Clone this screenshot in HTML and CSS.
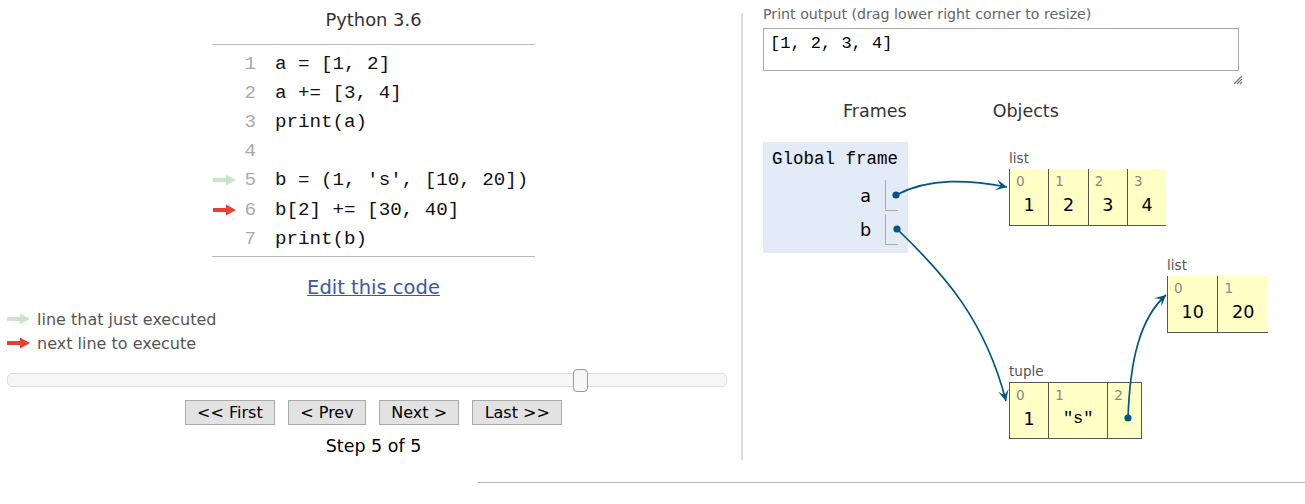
FILE: index.html
```html
<!DOCTYPE html>
<html>
<head>
<meta charset="utf-8">
<title>Python Tutor</title>
<link rel="stylesheet" href="styles.css">
</head>
<body>
<div class="main">
  <div class="left">
    <div class="title">Python 3.6</div>
    <div class="code">
      <div class="row"><span class="gutter"></span><span class="lineno">1</span><span class="src">a = [1, 2]</span></div>
      <div class="row"><span class="gutter"></span><span class="lineno">2</span><span class="src">a += [3, 4]</span></div>
      <div class="row"><span class="gutter"></span><span class="lineno">3</span><span class="src">print(a)</span></div>
      <div class="row"><span class="gutter"></span><span class="lineno">4</span><span class="src"></span></div>
      <div class="row"><span class="gutter"><svg class="arrow" width="23" height="12" viewBox="0 0 23 12"><path d="M0 4 H13 V0.5 L23 6 L13 11.5 V8 H0 Z" fill="#c9e6ca"/></svg></span><span class="lineno">5</span><span class="src">b = (1, 's', [10, 20])</span></div>
      <div class="row"><span class="gutter"><svg class="arrow" width="23" height="12" viewBox="0 0 23 12"><path d="M0 4 H13 V0.5 L23 6 L13 11.5 V8 H0 Z" fill="#e93f34"/></svg></span><span class="lineno">6</span><span class="src">b[2] += [30, 40]</span></div>
      <div class="row"><span class="gutter"></span><span class="lineno">7</span><span class="src">print(b)</span></div>
    </div>
    <a class="edit" href="#">Edit this code</a>
    <div class="legend">
      <div class="legend-row"><svg class="arrow" width="23" height="12" viewBox="0 0 23 12"><path d="M0 4 H13 V0.5 L23 6 L13 11.5 V8 H0 Z" fill="#c9e6ca"/></svg><span>line that just executed</span></div>
      <div class="legend-row"><svg class="arrow" width="23" height="12" viewBox="0 0 23 12"><path d="M0 4 H13 V0.5 L23 6 L13 11.5 V8 H0 Z" fill="#e93f34"/></svg><span>next line to execute</span></div>
    </div>
    <div class="slider"><div class="thumb"></div></div>
    <div class="buttons">
      <button class="btn">&lt;&lt; First</button>
      <button class="btn">&lt; Prev</button>
      <button class="btn">Next &gt;</button>
      <button class="btn">Last &gt;&gt;</button>
    </div>
    <div class="step">Step 5 of 5</div>
  </div>
  <div class="divider"></div>
  <div class="right">
    <div class="print-label">Print output (drag lower right corner to resize)</div>
    <div class="print-wrap">
      <div class="print-box">[1, 2, 3, 4]</div>
      <svg class="handle" width="10" height="10" viewBox="0 0 10 10"><path d="M9 1 L1 9 M9 4 L4 9 M9 7 L7 9" stroke="#777" stroke-width="1.2"/></svg>
    </div>
    <div class="viz">
      <div class="headers"><span class="h-frames">Frames</span><span class="h-objects">Objects</span></div>
      <div class="frame">
        <div class="frame-name">Global frame</div>
        <div class="var"><span class="var-name">a</span><span class="var-val"></span></div>
        <div class="var"><span class="var-name">b</span><span class="var-val"></span></div>
      </div>
      <div class="heapobj obj-a">
        <div class="typelabel">list</div>
        <div class="heaplist">
          <div class="hcell"><span class="idx">0</span><span class="val">1</span></div>
          <div class="hcell"><span class="idx">1</span><span class="val">2</span></div>
          <div class="hcell"><span class="idx">2</span><span class="val">3</span></div>
          <div class="hcell"><span class="idx">3</span><span class="val">4</span></div>
        </div>
      </div>
      <div class="heapobj obj-inner">
        <div class="typelabel">list</div>
        <div class="heaplist">
          <div class="hcell"><span class="idx">0</span><span class="val">10</span></div>
          <div class="hcell"><span class="idx">1</span><span class="val">20</span></div>
        </div>
      </div>
      <div class="heapobj obj-tuple">
        <div class="typelabel">tuple</div>
        <div class="heaptuple">
          <div class="hcell"><span class="idx">0</span><span class="val">1</span></div>
          <div class="hcell"><span class="idx">1</span><span class="val mono">"s"</span></div>
          <div class="hcell ptr"><span class="idx">2</span><span class="val"></span></div>
        </div>
      </div>
    </div>
  </div>
</div>
<div class="footer-line"></div>
<svg class="arrows" width="1305" height="504" viewBox="0 0 1305 504">
  <defs>
    <marker id="head" markerUnits="userSpaceOnUse" markerWidth="14" markerHeight="12" refX="11" refY="6" orient="auto" viewBox="0 0 14 12">
      <path d="M0 0.5 L11 6 L0 11.5 L5 6 Z" fill="#005583"/>
    </marker>
  </defs>
  <g fill="none" stroke="#005583" stroke-width="1.7">
    <path d="M896 195 C 930 177, 970 180, 1007 187" marker-end="url(#head)"/>
    <path d="M897 229 C 945 275, 985 320, 1006 401" marker-end="url(#head)"/>
    <path d="M1128 418 C 1130 360, 1140 318, 1166 295" marker-end="url(#head)"/>
  </g>
  <g fill="#005583">
    <circle cx="896" cy="195" r="3.6"/>
    <circle cx="897" cy="229" r="3.6"/>
    <circle cx="1128" cy="418" r="3.6"/>
  </g>
</svg>
</body>
</html>
```
FILE: styles.css
```css
* { box-sizing: border-box; }
body {
  margin: 0;
  font-family: "DejaVu Sans", Verdana, sans-serif;
  color: #000;
  background: #fff;
}
.main {
  display: flex;
  align-items: flex-start;
}
.left {
  width: 741px;
  padding-left: 6px;
  display: flex;
  flex-direction: column;
  align-items: center;
}
.title {
  margin-top: 9px;
  font-size: 17.9px;
  line-height: 22px;
  color: #333;
}
.code {
  margin-top: 13px;
  width: 323px;
  border-top: 1px solid #bbb;
  border-bottom: 1px solid #bbb;
  padding: 4px 0 3px;
  font-family: "Liberation Mono", "Courier New", monospace;
  font-size: 19.2px;
}
.row {
  display: flex;
  align-items: center;
  height: 29.2px;
  white-space: pre;
}
.gutter {
  width: 26px;
  display: flex;
  align-items: center;
  padding-left: 1px;
}
.arrow { display: block; }
.lineno {
  width: 18px;
  text-align: right;
  color: #aaa;
}
.src {
  padding-left: 19px;
  color: #111;
}
.edit {
  margin-top: 19px;
  font-size: 19.5px;
  line-height: 24px;
  color: #3d58a2;
  text-decoration: underline;
}
.legend {
  align-self: stretch;
  margin-top: 7px;
  margin-left: 1px;
  font-size: 16px;
  color: #555;
}
.legend-row {
  display: flex;
  align-items: center;
  gap: 7px;
  height: 24px;
}
.slider {
  align-self: flex-start;
  position: relative;
  margin-top: 18px;
  margin-left: 1px;
  width: 720px;
  height: 14px;
  border: 1px solid #ddd;
  border-radius: 5px;
  background: #f6f6f6;
}
.thumb {
  position: absolute;
  left: 565px;
  top: -5px;
  width: 15px;
  height: 23px;
  border: 1px solid #999;
  border-radius: 4px;
  background: #f6f6f6;
}
.buttons {
  margin-top: 13px;
  display: flex;
  gap: 13px;
}
.btn {
  height: 25px;
  padding: 0 11.3px;
  font-family: "DejaVu Sans", Verdana, sans-serif;
  font-size: 16px;
  color: #000;
  background: #e2e2e2;
  border: 1px solid #aaa;
  border-radius: 0;
}
.step {
  margin-top: 10px;
  font-size: 17.5px;
  line-height: 22px;
}
.divider {
  margin-top: 13px;
  width: 2px;
  height: 447px;
  background: #ddd;
}
.right {
  flex: 1;
  padding-left: 20px;
}
.print-label {
  margin-top: 5px;
  font-size: 14.2px;
  line-height: 18px;
  color: #666;
}
.print-wrap {
  position: relative;
  margin-top: 5px;
  width: 476px;
}
.print-box {
  height: 43px;
  border: 1px solid #aaa;
  padding: 5px 6px 4px;
  font-family: "Liberation Mono", "Courier New", monospace;
  font-size: 17px;
  line-height: 20px;
}
.handle {
  position: absolute;
  left: 470px;
  top: 47px;
}
.viz {
  position: relative;
  margin-top: 29px;
  height: 360px;
}
.headers {
  display: flex;
  font-size: 17.5px;
  line-height: 22px;
  color: #333;
}
.h-frames { margin-left: 80px; }
.h-objects { margin-left: 86px; }
.frame {
  margin-top: 20px;
  width: 145px;
  background: #e2ebf6;
  padding: 7px 10px 8px 9px;
}
.frame-name {
  font-family: "Liberation Mono", "Courier New", monospace;
  font-size: 17.5px;
  line-height: 20px;
  white-space: pre;
}
.var {
  display: flex;
  justify-content: flex-end;
  align-items: center;
  margin-top: 3px;
}
.frame-name + .var { margin-top: 11px; }
.var-name {
  font-size: 17.5px;
  padding-right: 14px;
}
.var-val {
  width: 13px;
  height: 31px;
  border-left: 1px solid #aaa;
  border-bottom: 1px solid #aaa;
}
.heapobj { position: absolute; }
.obj-a { left: 246px; top: 50px; }
.obj-inner { left: 404px; top: 157px; }
.obj-tuple { left: 246px; top: 263px; }
.typelabel {
  font-size: 13.6px;
  line-height: 16px;
  color: #555;
  margin-bottom: 3px;
}
.heaplist {
  display: flex;
  background: #ffffc6;
  border-bottom: 1px solid #555;
}
.heaptuple {
  display: flex;
  background: #ffffc6;
  border: 1px solid #555;
}
.hcell {
  display: flex;
  flex-direction: column;
  height: 56px;
  border-left: 1px solid #555;
}
.heaptuple .hcell { height: 55px; }
.heaptuple .hcell:first-child { border-left: none; }
.idx {
  margin-top: 5px;
  margin-left: 6px;
  font-size: 13.5px;
  line-height: 15px;
  color: #888;
}
.val {
  margin-top: 5px;
  padding: 0 13.6px;
  font-size: 17.5px;
  line-height: 22px;
  text-align: center;
}
.val.mono {
  font-family: "Liberation Mono", "Courier New", monospace;
  font-size: 17px;
}
.hcell.ptr { width: 34px; }
.footer-line {
  margin-left: 478px;
  margin-top: 22px;
  height: 1px;
  background: #bbb;
}
.arrows {
  position: absolute;
  left: 0;
  top: 0;
  pointer-events: none;
}
```
